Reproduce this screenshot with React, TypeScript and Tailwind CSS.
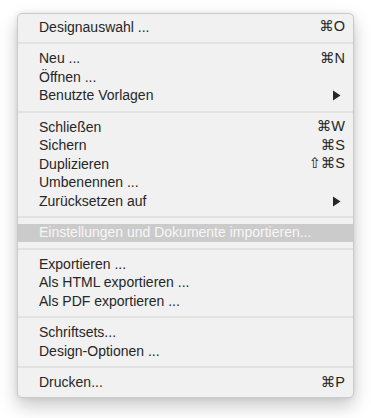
import React from "react";

type Item =
  | { type: "sep" }
  | { type: "item"; label: string; shortcut?: string; sub?: boolean; hl?: boolean };

const items: Item[] = [
  { type: "item", label: "Designauswahl ...", shortcut: "⌘O" },
  { type: "sep" },
  { type: "item", label: "Neu ...", shortcut: "⌘N" },
  { type: "item", label: "Öffnen ..." },
  { type: "item", label: "Benutzte Vorlagen", sub: true },
  { type: "sep" },
  { type: "item", label: "Schließen", shortcut: "⌘W" },
  { type: "item", label: "Sichern", shortcut: "⌘S" },
  { type: "item", label: "Duplizieren", shortcut: "⇧⌘S" },
  { type: "item", label: "Umbenennen ..." },
  { type: "item", label: "Zurücksetzen auf", sub: true },
  { type: "sep" },
  { type: "item", label: "Einstellungen und Dokumente importieren...", hl: true },
  { type: "sep" },
  { type: "item", label: "Exportieren ..." },
  { type: "item", label: "Als HTML exportieren ..." },
  { type: "item", label: "Als PDF exportieren ..." },
  { type: "sep" },
  { type: "item", label: "Schriftsets..." },
  { type: "item", label: "Design-Optionen ..." },
  { type: "sep" },
  { type: "item", label: "Drucken...", shortcut: "⌘P" },
];

export default function App() {
  return (
    <div className="w-[371px] h-[418px] bg-white pt-[13px] pl-[17px]">
      <div
        className="w-[337px] rounded-[5px] bg-[#f1f1f1] border border-[#cacaca] pt-[4px] pb-[5px] shadow-[0_8px_18px_rgba(0,0,0,0.22),0_0_5px_rgba(0,0,0,0.08)] text-[14px] text-[#262626]"
        style={{ fontFamily: '"Liberation Sans", "DejaVu Sans", sans-serif' }}
      >
        {items.map((it, i) =>
          it.type === "sep" ? (
            <div key={i} className="h-[13px] flex items-center">
              <div className="h-[2px] w-full bg-[#e2e2e2]" />
            </div>
          ) : (
            <div
              key={i}
              className={
                it.hl
                  ? "h-[18.5px] flex items-center pl-[21px] pr-[8px] bg-[#cbcbcb] text-[#f7f7f7]"
                  : "h-[18.5px] flex items-center pl-[21px] pr-[8px]"
              }
            >
              <span className="flex-1 whitespace-nowrap">{it.label}</span>
              {it.shortcut && <span className="whitespace-nowrap text-[14.5px]">{it.shortcut}</span>}
              {it.sub && (
                <svg width="9" height="11" viewBox="0 0 9 11" className="mr-[4px]">
                  <path d="M1 0.5 L8.5 5.5 L1 10.5 Z" fill="#262626" />
                </svg>
              )}
            </div>
          )
        )}
      </div>
    </div>
  );
}
